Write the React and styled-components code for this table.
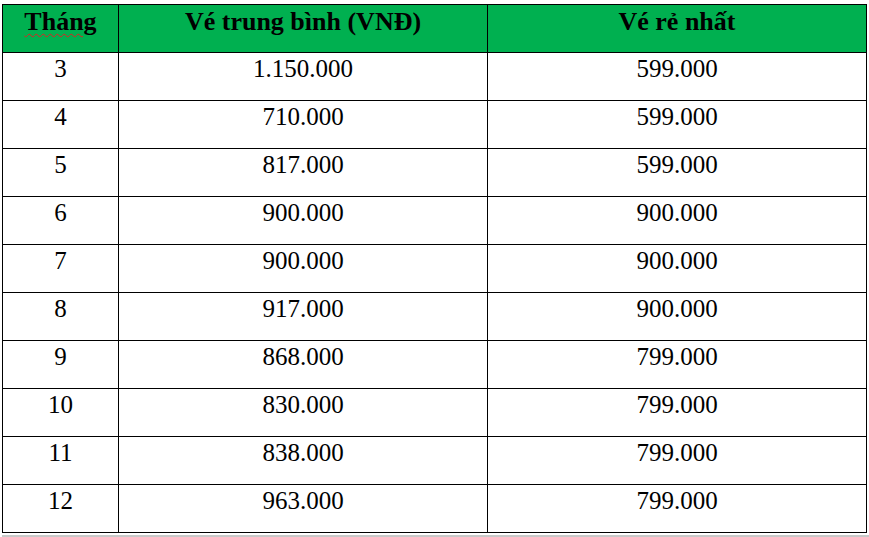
import React from "react";
import styled, { createGlobalStyle } from "styled-components";

const GlobalStyle = createGlobalStyle`
  html, body {
    margin: 0;
    padding: 0;
    background: #ffffff;
  }
  body {
    font-family: "Liberation Serif", "Times New Roman", serif;
    color: #000;
  }
`;

const rows = [
  ["3", "1.150.000", "599.000"],
  ["4", "710.000", "599.000"],
  ["5", "817.000", "599.000"],
  ["6", "900.000", "900.000"],
  ["7", "900.000", "900.000"],
  ["8", "917.000", "900.000"],
  ["9", "868.000", "799.000"],
  ["10", "830.000", "799.000"],
  ["11", "838.000", "799.000"],
  ["12", "963.000", "799.000"],
];

const App = () => {
  return (
    <>
      <GlobalStyle />
      <Page>
        <Table>
          <colgroup>
            <col style={{ width: 116 }} />
            <col style={{ width: 369 }} />
            <col style={{ width: 379 }} />
          </colgroup>
          <thead>
            <tr>
              <HeadCell>
                <Misspelled>Tháng</Misspelled>
              </HeadCell>
              <HeadCell>Vé trung bình (VNĐ)</HeadCell>
              <HeadCell>Vé rẻ nhất</HeadCell>
            </tr>
          </thead>
          <tbody>
            {rows.map((r) => (
              <tr key={r[0]}>
                {r.map((v, i) => (
                  <Cell key={i}>{v}</Cell>
                ))}
              </tr>
            ))}
          </tbody>
        </Table>
        <BottomRule />
      </Page>
    </>
  );
};

const Page = styled.div`
  padding: 4px 0 0 2px;
  width: 869px;
  height: 537px;
  box-sizing: border-box;
  overflow: hidden;
`;

const Table = styled.table`
  border-collapse: collapse;
  table-layout: fixed;
  width: 865px;
  font-family: "Liberation Serif", "Times New Roman", serif;
  color: #000;
`;

const HeadCell = styled.th`
  background: #00b050;
  border: 1px solid #000;
  height: 48px;
  padding: 2px 4px 0;
  vertical-align: top;
  text-align: center;
  font-family: "Liberation Serif", "Times New Roman", serif;
  font-size: 26px;
  font-weight: bold;
  line-height: 30px;
  box-sizing: border-box;
`;

const Misspelled = styled.span`
  text-decoration: underline wavy #e02020;
  text-decoration-thickness: 1px;
  text-underline-offset: 3px;
`;

const Cell = styled.td`
  border: 1px solid #000;
  height: 48px;
  padding: 1px 4px 0;
  vertical-align: top;
  text-align: center;
  font-family: "Liberation Serif", "Times New Roman", serif;
  font-size: 25px;
  line-height: 29px;
  box-sizing: border-box;
`;

const BottomRule = styled.div`
  margin-top: 2px;
  height: 2px;
  background: #c8c8c8;
`;

export default App;
